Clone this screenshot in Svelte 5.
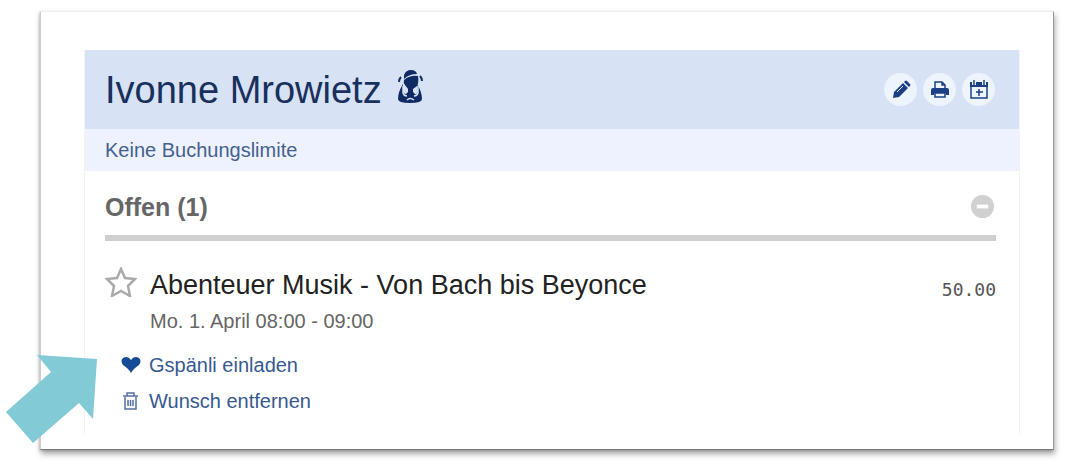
<script>
  const person = { name: "Ivonne Mrowietz", limit: "Keine Buchungslimite" };

  const bookings = [
    {
      title: "Abenteuer Musik - Von Bach bis Beyonce",
      date: "Mo. 1. April 08:00 - 09:00",
      price: "50.00",
    },
  ];

  let open = true;
  let starred = false;
</script>

<main class="sheet">
  <section class="panel">
    <header>
      <h1>
        {person.name}
        <svg class="girl" viewBox="0 0 26 34" aria-hidden="true">
          <path d="M7 5Q9 0 14 0q5 0 6 4Q12 4 7 9z" />
          <path d="M7 10q6-5 14-4 1 6-1 10l-4 3v3l3 3q-5 3-11 0l3-3v-3l-3-4q-2-2-1-5z" />
          <path d="M4 7q-2 2-2 5M23 6q2 2 2 5" class="braid" />
          <path d="M6 14q-5 8-5 15 0 4 12 4t12-4q0-7-5-15l1 8q-1 3-7 3t-8-3z" />
          <path d="M6 16v7q1 3 4 3M21 16v7q-1 3-4 3M10 30q3-3 7 0" class="seam" />
        </svg>
      </h1>
      <div class="tools">
        <button type="button" aria-label="Bearbeiten">
          <svg viewBox="0 0 20 20">
            <path d="M2 18l1-6 9-9 5 5-9 9zM13 2l1-1q1-1 2 0l3 3q1 1 0 2l-1 1z" />
            <path d="M6 12l6-6" class="shine" />
          </svg>
        </button>
        <button type="button" aria-label="Drucken">
          <svg viewBox="0 0 20 20">
            <path d="M5 9V2h7l3 3v4M12 2v3h3" class="line" />
            <path d="M3 8h14q2 0 2 2v5h-3v-2H4v2H1v-5q0-2 2-2z" />
            <path d="M5 13h10v4H5z" class="line" />
          </svg>
        </button>
        <button type="button" aria-label="In Kalender eintragen">
          <svg viewBox="0 0 20 20">
            <path d="M1 2h18v5H1z" />
            <path d="M2 4h16v14H2zM10 9v7M7 12h7" class="line" />
            <path d="M5 0v5M15 0v5" class="ring" />
            <path d="M5 0v5M15 0v5" class="line" />
          </svg>
        </button>
      </div>
    </header>
    <p class="limit">{person.limit}</p>

    <div class="content">
      <div class="group">
        <h2>Offen ({bookings.length})</h2>
        <button
          type="button"
          aria-label="Offen ein- oder ausklappen"
          aria-expanded={open}
          on:click={() => (open = !open)}
        >
          <svg viewBox="0 0 24 24">
            <circle cx="12" cy="12" r="12" />
            <path d={open ? "M6 12h12" : "M6 12h12M12 6v12"} />
          </svg>
        </button>
      </div>

      {#if open}
        {#each bookings as booking}
          <article>
            <button
              type="button"
              class="star"
              class:starred
              aria-label="Priorisieren"
              on:click={() => (starred = !starred)}
            >
              <svg viewBox="0 0 32 30">
                <path d="M16 2l4 9 10 1-7 7 2 10-9-5-9 5 2-10-7-7 10-1z" />
              </svg>
            </button>
            <div class="details">
              <h3>{booking.title}</h3>
              <p>{booking.date}</p>
            </div>
            <span class="price">{booking.price}</span>
          </article>
          <ul>
            <li>
              <a href="#einladen">
                <svg viewBox="0 0 20 18" aria-hidden="true">
                  <path d="M10 17Q8 13 2 9-1 5 2 2q5-3 8 2 3-5 8-2 3 3 0 7-6 4-8 8z" />
                </svg>
                Gspänli einladen
              </a>
            </li>
            <li>
              <a href="#entfernen">
                <svg class="trash" viewBox="0 0 20 18" aria-hidden="true">
                  <path d="M2 4h15M6 4V1h7v3M4 5v12h11V5M7 8v6M9.500 8v6M12 8v6" />
                </svg>
                Wunsch entfernen
              </a>
            </li>
          </ul>
        {/each}
      {/if}
    </div>
  </section>
</main>

<svg class="pointer" viewBox="0 0 91 88" aria-hidden="true">
  <path d="M31 0l60 4-4 60-14-16-46 40L0 57l45-40z" />
</svg>

<style>
  :global(body) {
    background: #fff;
    font-family: "Liberation Sans", Arial, sans-serif;
  }

  .sheet {
    border: 1px solid #eee;
    border-right-color: #999;
    border-bottom-color: #777;
    border-left-color: #ccc;
    box-shadow: 1px 4px 6px rgba(0, 0, 0, 0.35), -1px 1px 2px rgba(0, 0, 0, 0.15);
    margin: 11px 19px 14px 40px;
    padding: 38px 33px 14px 43px;
  }

  .panel {
    border: solid #f3f3f3;
    border-width: 0 1px;
  }

  h1,
  h2,
  h3,
  p,
  ul {
    font-weight: normal;
    margin: 0;
    padding: 0;
  }

  button {
    background: none;
    border: none;
    cursor: pointer;
    display: flex;
    flex: none;
    padding: 0;
  }

  header {
    background: #d7e2f5;
    display: flex;
    align-items: center;
    justify-content: space-between;
    height: 79px;
    padding: 0 24px 0 20px;
  }

  h1 {
    color: #18305c;
    display: flex;
    align-items: center;
    gap: 15px;
    font-size: 38px;
    line-height: 44px;
  }

  .girl {
    fill: #102a63;
    height: 34px;
    margin-bottom: 6px;
    width: 26px;
  }

  .braid {
    fill: none;
    stroke: #102a63;
    stroke-width: 2;
  }

  .seam {
    fill: none;
    stroke: #d7e2f5;
    stroke-width: 1.5;
  }

  .tools {
    display: flex;
    gap: 6px;
  }

  .tools button {
    background: #eef4fe;
    border-radius: 50%;
    align-items: center;
    justify-content: center;
    height: 33px;
    width: 33px;
  }

  .tools svg {
    fill: #1c3f85;
    height: 20px;
    width: 20px;
  }

  .tools .line {
    fill: none;
    stroke: #1c3f85;
    stroke-width: 1.5;
  }

  .tools .line:nth-child(3) {
    fill: #eef4fe;
  }

  .tools .ring,
  .shine {
    stroke: #eef4fe;
    stroke-width: 4;
  }

  .tools .shine {
    stroke-width: 1;
  }

  .limit {
    background: #edf2fe;
    color: #45618f;
    font-size: 20px;
    line-height: 42px;
    padding: 0 20px;
  }

  .content {
    padding: 0 23px 16px 20px;
  }

  .group {
    border-bottom: 6px solid #d0d0d0;
    display: flex;
    align-items: center;
    justify-content: space-between;
    height: 64px;
    padding: 0 2px 0 0;
  }

  h2 {
    color: #666;
    font-size: 25px;
    font-weight: bold;
    line-height: 28px;
    padding-top: 8px;
  }

  .group svg {
    fill: #d0d0d0;
    height: 23px;
    margin-top: 6px;
    width: 23px;
  }

  .group path {
    stroke: #fff;
    stroke-width: 4;
  }

  article {
    display: flex;
    padding-top: 26px;
  }

  .star {
    width: 45px;
  }

  .star svg {
    fill: none;
    height: 30px;
    stroke: #aaa;
    stroke-width: 2.5;
    width: 32px;
  }

  .starred svg {
    fill: #aaa;
  }

  .details {
    flex: 1;
  }

  h3 {
    color: #222;
    font-size: 27px;
    line-height: 36px;
  }

  .details p {
    color: #666;
    font-size: 20px;
    line-height: 36px;
  }

  .price {
    color: #555;
    font-family: "DejaVu Sans Mono", monospace;
    font-size: 18px;
    line-height: 46px;
  }

  ul {
    list-style: none;
    padding: 8px 0 0 16px;
  }

  a {
    color: #38598f;
    display: flex;
    align-items: center;
    gap: 8px;
    font-size: 20px;
    line-height: 36px;
    text-decoration: none;
  }

  a svg {
    fill: #154a96;
    height: 18px;
    width: 20px;
  }

  a .trash {
    fill: none;
    stroke: #536f9f;
    stroke-width: 1.5;
  }

  .pointer {
    fill: #83cad7;
    height: 88px;
    left: 6px;
    position: absolute;
    top: 355px;
    width: 91px;
  }
</style>
